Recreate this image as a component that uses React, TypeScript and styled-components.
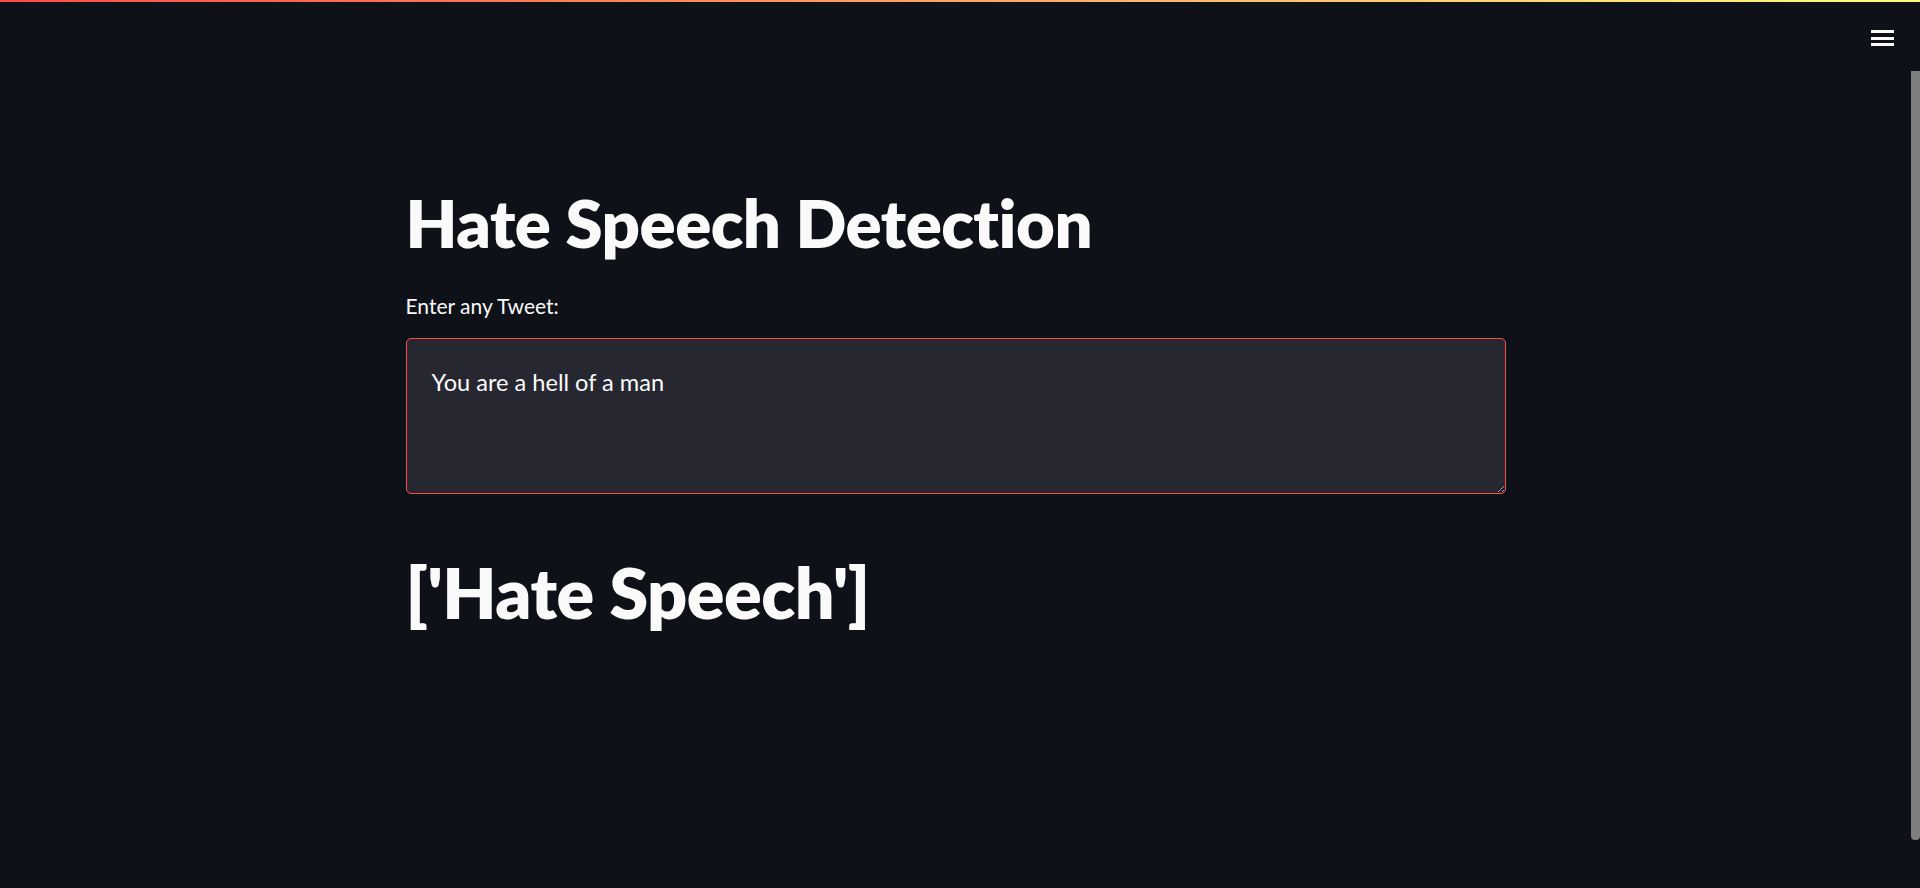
import React from "react";
import styled, { createGlobalStyle } from "styled-components";

const Global = createGlobalStyle`
  html, body { margin: 0; padding: 0; background: #0e1117; }
  body { font-family: "Lato", "Noto Sans", sans-serif; color: #fafafa; overflow: hidden; }
  * { box-sizing: border-box; }
`;

const Page = styled.div`
  position: relative;
  width: 1920px;
  height: 888px;
  background: #0e1117;
  display: flex;
  flex-direction: column;
`;

const Decoration = styled.div`
  height: 2px;
  width: 100%;
  background: linear-gradient(90deg, rgb(255, 75, 75), rgb(255, 253, 128));
`;

const Header = styled.header`
  display: flex;
  justify-content: flex-end;
  padding: 28px 26px 0 0;
  height: 60px;
`;

const MenuButton = styled.button`
  display: flex;
  flex-direction: column;
  gap: 3.5px;
  background: none;
  border: none;
  padding: 0;
  cursor: pointer;
  width: 23px;
`;

const Bar = styled.span`
  display: block;
  width: 23px;
  height: 3px;
  background: #fafafa;
`;

const Main = styled.main`
  width: 1100px;
  margin: 0 auto;
  padding-right: 9px;
  box-sizing: content-box;
  display: flex;
  flex-direction: column;
`;

const Heading = styled.h1<{ $size: number; $top: number }>`
  margin: ${(p) => p.$top}px 0 0 0;
  font-family: "Lato", sans-serif;
  font-weight: 800;
  font-size: ${(p) => p.$size}px;
  line-height: 80px;
  color: #fafafa;
  letter-spacing: -0.5px;
`;

const Label = styled.label`
  margin-top: 32px;
  font-size: 21px;
  line-height: 24px;
  color: #fafafa;
`;

const TextArea = styled.textarea`
  margin-top: 20px;
  width: 1100px;
  height: 156px;
  background: #262730;
  color: #fafafa;
  border: 1px solid #ff4b4b;
  border-radius: 5px;
  padding: 26px 25px 20px;
  font-family: "Lato", sans-serif;
  font-size: 23.6px;
  line-height: 34px;
  resize: vertical;
  outline: none;
`;

const ScrollThumb = styled.div`
  position: absolute;
  right: 0;
  top: 71px;
  width: 9px;
  height: 769px;
  background: #7e7e7e;
  border-radius: 0 0 4px 4px;
`;

export default function App() {
  return (
    <Page>
      <Global />
      <Decoration />
      <Header>
        <MenuButton aria-label="menu">
          <Bar />
          <Bar />
          <Bar />
        </MenuButton>
      </Header>
      <Main>
        <Heading $size={67} $top={120}>Hate Speech Detection</Heading>
        <Label htmlFor="tweet">Enter any Tweet:</Label>
        <TextArea id="tweet" defaultValue="You are a hell of a man" />
        <Heading as="h2" $size={70} $top={58}>['Hate Speech']</Heading>
      </Main>
      <ScrollThumb />
    </Page>
  );
}
